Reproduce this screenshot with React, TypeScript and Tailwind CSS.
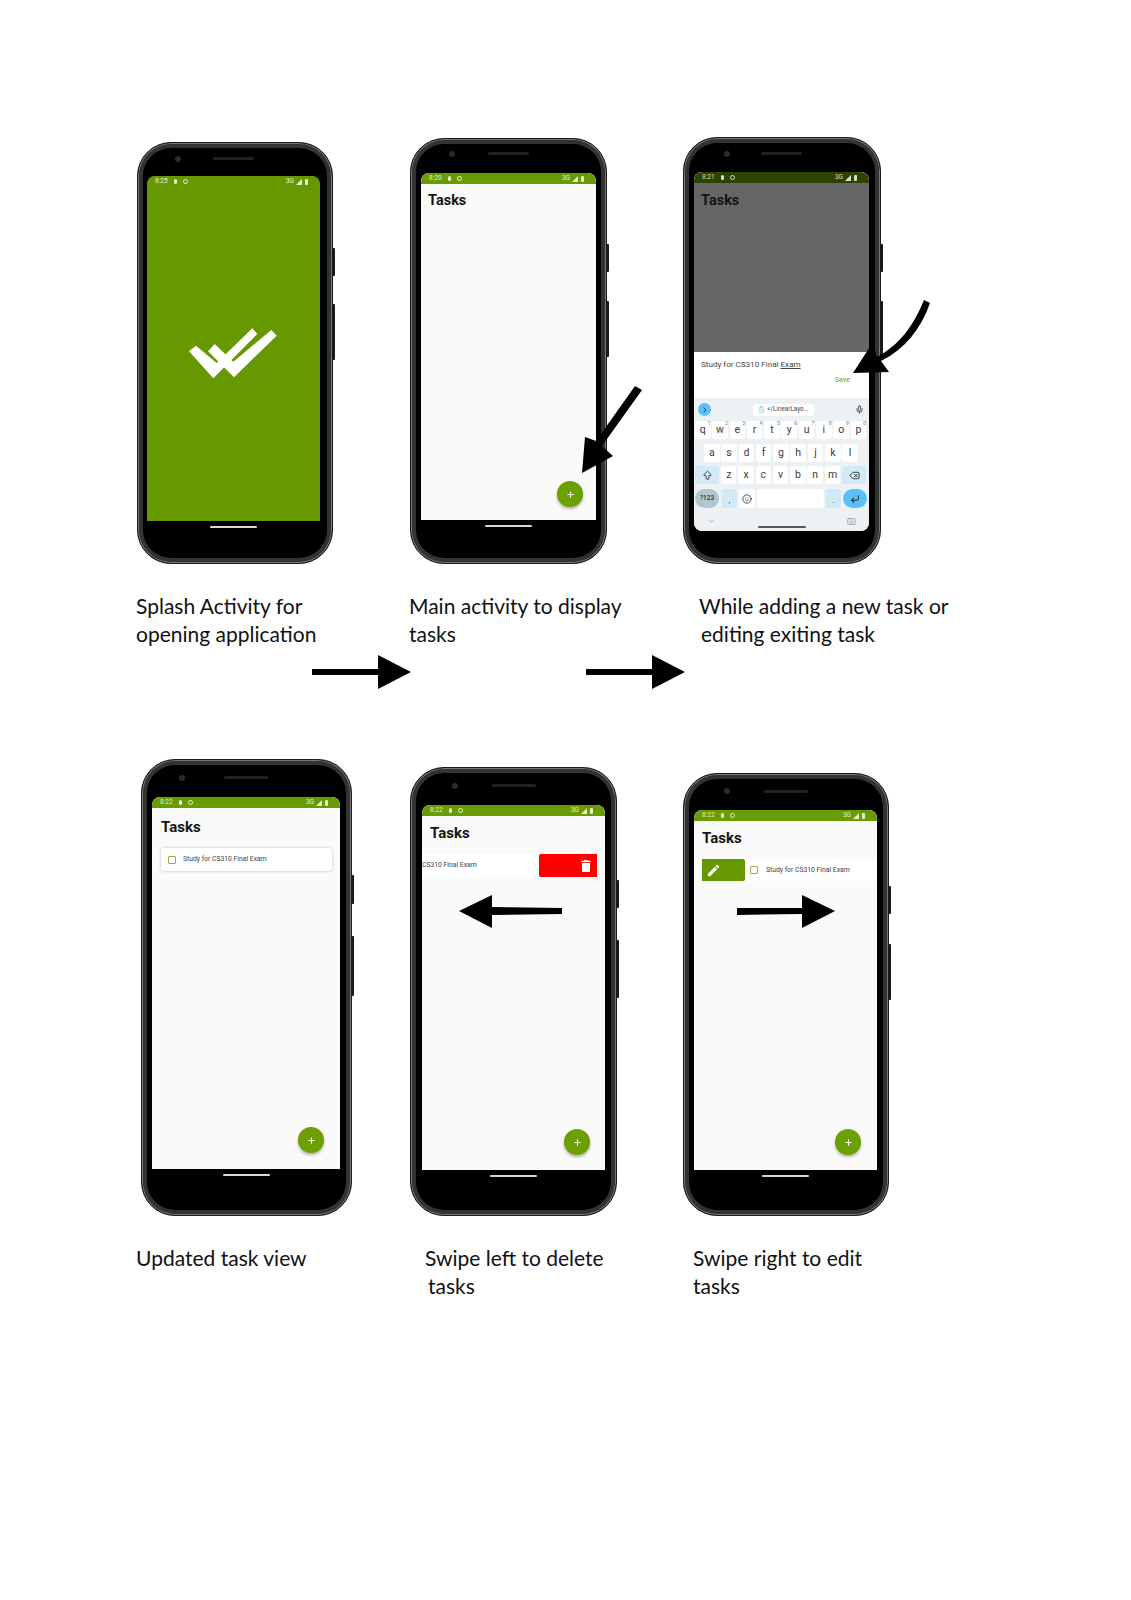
import type { ReactNode } from "react";
import {
  ArrowBigUp,
  ChevronDown,
  ChevronRight,
  ClipboardList,
  CornerDownLeft,
  Delete,
  Keyboard,
  Mic,
  Plus,
  Smile,
} from "lucide-react";

const TrashIcon = () => (
  <svg viewBox="0 0 24 24" className="w-[16px] h-[16px]" fill="#ffffff">
    <path d="M6 19c0 1.1.9 2 2 2h8c1.1 0 2-.9 2-2V7H6v12zM19 4h-3.5l-1-1h-5l-1 1H5v2h14V4z" />
  </svg>
);

const PencilIcon = () => (
  <svg viewBox="0 0 24 24" className="w-[15px] h-[15px]" fill="#ffffff">
    <path d="M3 17.25V21h3.75L17.81 9.94l-3.75-3.75L3 17.25zM20.71 7.04c.39-.39.39-1.02 0-1.41l-2.34-2.34c-.39-.39-1.02-.39-1.41 0l-1.83 1.83 3.75 3.75 1.83-1.83z" />
  </svg>
);

type StatusProps = { time: string; bar?: string; tone?: string };

const StatusBar = ({ time, bar = "bg-[#699c00]", tone = "text-[#e6efcf]" }: StatusProps) => (
  <div className={`h-[11px] shrink-0 rounded-t-[8px] flex items-center justify-between pl-[8px] pr-[12px] text-[6.5px] ${bar} ${tone}`}>
    <div className="flex items-center gap-[6px]">
      <span>{time}</span>
      <span className="w-[3px] h-[5px] rounded-full bg-current" />
      <span className="w-[5px] h-[5px] rounded-full border border-current" />
    </div>
    <div className="flex items-center gap-[2px]">
      <span>3G</span>
      <svg viewBox="0 0 6 6" className="w-[6px] h-[6px]" fill="currentColor">
        <polygon points="6,0 6,6 0,6" />
      </svg>
      <span className="w-[3px] h-[6px] ml-[1px] rounded-[1px] bg-current" />
    </div>
  </div>
);

const Title = ({ className }: { className: string }) => (
  <h1 className={`leading-[19px] font-bold text-[#141414] ${className}`}>Tasks</h1>
);

const Fab = ({ className }: { className: string }) => (
  <div className={`absolute w-[26px] h-[26px] rounded-full bg-[#6ca000] shadow-[0_2px_3px_rgba(0,0,0,0.3)] flex items-center justify-center ${className}`}>
    <Plus className="w-[9px] h-[9px] text-white" strokeWidth={3} />
  </div>
);

const Checkbox = () => <span className="w-[8px] h-[8px] shrink-0 border-[1.5px] border-[#8fb24e] rounded-[1px]" />;

const TaskText = ({ children }: { children: ReactNode }) => (
  <span className="text-[6.8px] text-[#444444] whitespace-nowrap">{children}</span>
);

type PhoneProps = {
  size: string;
  inset: string;
  topBezel: string;
  bottomBezel?: string;
  camera: string;
  buttons: string[];
  speaker?: string;
  screen: string;
  homeBar?: boolean;
  children: ReactNode;
};

const Phone = ({ size, inset, topBezel, bottomBezel, camera, buttons, speaker = "w-[41px]", screen, homeBar = true, children }: PhoneProps) => (
  <div className={`relative flex flex-col bg-black rounded-[34px] border border-[#1c1c1c] shadow-[inset_0_0_0_1px_#777777,inset_0_0_0_5px_#333333] font-['Roboto',sans-serif] ${size} ${inset}`}>
    <div className={`relative shrink-0 flex items-center justify-center ${topBezel}`}>
      <span className={`absolute w-[6px] h-[6px] rounded-full bg-[#2b2b2b] ${camera}`} />
      <span className={`h-[3px] rounded-full bg-[#222222] ${speaker}`} />
    </div>
    <div className={`relative flex-1 flex flex-col overflow-hidden ${screen}`}>{children}</div>
    {homeBar && (
      <div className={`shrink-0 flex justify-center pt-[5px] ${bottomBezel}`}>
        <span className="w-[47px] h-[2px] rounded-full bg-[#d8d8d8]" />
      </div>
    )}
    {buttons.map((b) => (
      <span key={b} className={`absolute right-[-3px] w-[3px] bg-[#1a1a1a] rounded-r-[1px] ${b}`} />
    ))}
  </div>
);

const Key = ({ label, sup, className = "" }: { label: string; sup?: string; className?: string }) => (
  <div className={`relative w-[15.5px] shrink-0 rounded-[3px] bg-white flex items-center justify-center text-[10.5px] text-[#3c3c3c] ${className}`}>
    {label}
    {sup && <span className="absolute right-[0px] top-[-1px] text-[5px] text-[#777777]">{sup}</span>}
  </div>
);

const KeyboardPanel = () => (
  <div className="flex-1 flex flex-col bg-[#eef1f3] px-[1px] rounded-b-[8px]">
    <div className="relative h-[23px] shrink-0 flex items-center justify-center">
      <span className="absolute left-[3px] w-[13px] h-[13px] rounded-full bg-[#5bc0f7] flex items-center justify-center">
        <ChevronRight className="w-[8px] h-[8px] text-[#23384a]" strokeWidth={3} />
      </span>
      <span className="ml-[4px] h-[12px] w-[61px] rounded-[3px] bg-white flex items-center justify-center gap-[2px] text-[6.3px] text-[#444444] whitespace-nowrap">
        <ClipboardList className="w-[7px] h-[7px] text-[#7fc4ef]" />
        &lt;/LinearLayo...
      </span>
      <Mic className="absolute right-[4px] w-[9px] h-[9px] text-[#444444]" strokeWidth={2.5} />
    </div>
    <div className="flex gap-[1.8px] h-[18px]">
      {"qwertyuiop".split("").map((k, i) => (
        <Key key={k} label={k} sup={String((i + 1) % 10)} />
      ))}
    </div>
    <div className="flex gap-[1.8px] h-[18px] mt-[5px] pl-[9px]">
      {"asdfghjkl".split("").map((k) => (
        <Key key={k} label={k} />
      ))}
    </div>
    <div className="flex gap-[1.8px] h-[18px] mt-[4px]">
      <div className="w-[24px] mr-[0.2px] shrink-0 rounded-[3px] bg-[#d2e9f8] flex items-center justify-center">
        <ArrowBigUp className="w-[11px] h-[11px] text-[#333333]" strokeWidth={2} />
      </div>
      {"zxcvbnm".split("").map((k) => (
        <Key key={k} label={k} />
      ))}
      <div className="w-[24px] shrink-0 rounded-[3px] bg-[#d2e9f8] flex items-center justify-center">
        <Delete className="w-[11px] h-[11px] text-[#333333]" />
      </div>
    </div>
    <div className="flex h-[19px] mt-[5px]">
      <div className="w-[24px] shrink-0 rounded-full bg-[#b2c6d0] flex items-center justify-center text-[6.5px] font-medium text-[#333333]">?123</div>
      <div className="w-[15px] ml-[3px] shrink-0 rounded-[3px] bg-[#d2e9f8] flex items-end justify-center text-[8px] leading-[14px] text-[#333333]">,</div>
      <div className="w-[16px] ml-[2px] shrink-0 rounded-[3px] bg-white flex items-center justify-center">
        <Smile className="w-[10px] h-[10px] text-[#333333]" />
      </div>
      <div className="w-[67px] ml-[2px] shrink-0 rounded-[3px] bg-white" />
      <div className="w-[15px] ml-[2px] shrink-0 rounded-[3px] bg-[#d2e9f8] flex items-end justify-center text-[8px] leading-[14px] text-[#333333]">.</div>
      <div className="w-[24px] ml-[2px] shrink-0 rounded-full bg-[#5bc0f7] flex items-center justify-center">
        <CornerDownLeft className="w-[10px] h-[10px] text-[#1f2f3a]" strokeWidth={2.5} />
      </div>
    </div>
    <div className="relative flex-1 flex justify-center">
      <ChevronDown className="absolute left-[13px] top-[10px] w-[7px] h-[7px] text-[#777777]" />
      <span className="mt-[18px] w-[48px] h-[2px] rounded-full bg-[#555555]" />
      <Keyboard className="absolute right-[12px] top-[9px] w-[9px] h-[9px] text-[#999999]" />
    </div>
  </div>
);

const Caption = ({ first, second, indent = "", secondIndent = "" }: { first: string; second?: string; indent?: string; secondIndent?: string }) => (
  <p className={`text-[21px] leading-[27.5px] text-[#111111] [font-family:Lato,sans-serif] whitespace-nowrap ${indent}`}>
    {first}
    {second && <span className={`block ${secondIndent}`}>{second}</span>}
  </p>
);

const Logo = () => (
  <svg viewBox="0 0 300 210" className="w-[100px] h-[70px] ml-[1px]" fill="#ffffff">
    <polygon points="15,97 36,80 98,132 205,28 220,45 88,178" />
    <polygon points="72,97 92,75 148,128 262,33 278,50 150,175" />
  </svg>
);

export default function App() {
  return (
    <main className="relative w-[1131px] h-[1600px] overflow-hidden bg-white pt-[137px] pl-[136px]">
      {/* top row */}
      <div className="grid grid-cols-[273px_273px_273px] items-end">
        <Phone
          size="w-[196px] h-[422px] ml-[1px]"
          inset="pl-[9px] pr-[12px]"
          topBezel="h-[33px] pb-[2px]"
          bottomBezel="h-[42px]"
          camera="left-[28px]"
          buttons={["top-[105px] h-[28px]", "top-[161px] h-[56px]"]}
          screen="rounded-t-[8px] bg-[#669900]"
        >
          <StatusBar time="8:25" bar="bg-[#669900]" />
          <div className="flex-1 flex items-center justify-center">
            <Logo />
          </div>
        </Phone>
        <Phone
          size="w-[197px] h-[426px] ml-[1px]"
          inset="pl-[10px] pr-[10px]"
          topBezel="h-[34px] pb-[5px]"
          bottomBezel="h-[43px]"
          camera="left-[28px]"
          buttons={["top-[105px] h-[28px]", "top-[162px] h-[56px]"]}
          screen="rounded-t-[8px] bg-[#fafafa]"
        >
          <StatusBar time="8:20" />
          <Title className="pl-[7px] pt-[7px] text-[14.5px]" />
          <Fab className="bottom-[13px] right-[13px]" />
        </Phone>
        <Phone
          size="w-[198px] h-[427px] ml-[1px]"
          inset="pl-[10px] pr-[11px] pb-[32px]"
          topBezel="h-[34px] pb-[3px]"
          camera="left-[30px]"
          homeBar={false}
          buttons={["top-[106px] h-[28px]", "top-[163px] h-[56px]"]}
          screen="rounded-[8px] bg-white"
        >
          <StatusBar time="8:21" bar="bg-[#2f4300]" tone="text-[#d8dfc8]" />
          <div className="h-[169px] shrink-0 bg-[#666666]">
            <Title className="pl-[7px] pt-[8px] text-[14.5px]" />
          </div>
          <div className="h-[46px] shrink-0 bg-white pl-[7px] pt-[7px] text-[8.1px] leading-[11px] text-[#444444]">
            Study for CS310 Final <span className="underline">Exam</span>
            <div className="mt-[5px] pr-[19px] text-right text-[7px] font-medium text-[#8ab82e]">Save</div>
          </div>
          <KeyboardPanel />
        </Phone>
      </div>
      <div className="grid grid-cols-[273px_273px_273px] mt-[28px]">
        <Caption first="Splash Activity for" second="opening application" />
        <Caption first="Main activity to display" second="tasks" />
        <Caption first="While adding a new task or" second="editing exiting task" indent="pl-[17px]" secondIndent="pl-[2px]" />
      </div>

      {/* bottom row */}
      <div className="grid grid-cols-[273px_273px_273px] items-end mt-[112px]">
        <Phone
          size="w-[211px] h-[457px] ml-[5px]"
          inset="pl-[10px] pr-[11px]"
          topBezel="h-[37px] pb-[2px]"
          bottomBezel="h-[46px]"
          camera="left-[27px]"
          speaker="w-[44px]"
          buttons={["top-[115px] h-[29px]", "top-[176px] h-[60px]"]}
          screen="rounded-t-[8px] bg-[#fafafa]"
        >
          <StatusBar time="8:22" />
          <Title className="pl-[9px] pt-[10px] text-[15px]" />
          <div className="mt-[11px] ml-[9px] mr-[8px] h-[23px] rounded-[3px] bg-white shadow-[0_0_3px_rgba(0,0,0,0.25)] flex items-center gap-[7px] pl-[7px]">
            <Checkbox />
            <TaskText>Study for CS310 Final Exam</TaskText>
          </div>
          <Fab className="bottom-[16px] right-[16px]" />
        </Phone>
        <Phone
          size="w-[207px] h-[449px] ml-[1px]"
          inset="pl-[11px] pr-[11px]"
          topBezel="h-[37px] pb-[2px]"
          bottomBezel="h-[45px]"
          camera="left-[30px]"
          speaker="w-[44px]"
          buttons={["top-[112px] h-[28px]", "top-[172px] h-[58px]"]}
          screen="rounded-t-[8px] bg-[#fafafa]"
        >
          <StatusBar time="8:22" />
          <Title className="pl-[8px] pt-[8px] text-[15px]" />
          <div className="mt-[11px] mr-[8px] h-[23px] flex">
            <div className="flex-1 bg-white flex items-center">
              <TaskText>CS310 Final Exam</TaskText>
            </div>
            <div className="w-[58px] bg-[#ff0000] rounded-l-[2px] flex items-center justify-end pr-[3px]">
              <TrashIcon />
            </div>
          </div>
          <Fab className="bottom-[15px] right-[15px]" />
        </Phone>
        <Phone
          size="w-[206px] h-[443px] ml-[1px]"
          inset="pl-[10px] pr-[11px]"
          topBezel="h-[36px] pb-[2px]"
          bottomBezel="h-[45px]"
          camera="left-[30px]"
          speaker="w-[44px]"
          buttons={["top-[112px] h-[28px]", "top-[170px] h-[56px]"]}
          screen="rounded-t-[8px] bg-[#fafafa]"
        >
          <StatusBar time="8:22" />
          <Title className="pl-[8px] pt-[8px] text-[15px]" />
          <div className="mt-[11px] ml-[8px] h-[22px] flex bg-white">
            <div className="w-[43px] bg-[#669900] rounded-r-[2px] flex items-center pl-[4px]">
              <PencilIcon />
            </div>
            <div className="flex-1 flex items-center gap-[8px] pl-[5px]">
              <Checkbox />
              <TaskText>Study for CS310 Final Exam</TaskText>
            </div>
          </div>
          <Fab className="bottom-[15px] right-[16px]" />
        </Phone>
      </div>
      <div className="grid grid-cols-[273px_273px_273px] mt-[28px]">
        <Caption first="Updated task view" />
        <Caption first="Swipe left to delete" second="tasks" indent="pl-[16px]" secondIndent="pl-[3px]" />
        <Caption first="Swipe right to edit" second="tasks" indent="pl-[11px]" />
      </div>

      {/* arrows drawn over the page */}
      <svg viewBox="0 0 100 36" className="absolute left-[312px] top-[654px] w-[100px] h-[36px]">
        <polygon points="0,15 66,15 66,1 99,18 66,35 66,21 0,21" />
      </svg>
      <svg viewBox="0 0 100 36" className="absolute left-[586px] top-[654px] w-[100px] h-[36px]">
        <polygon points="0,15 66,15 66,1 99,18 66,35 66,21 0,21" />
      </svg>
      <svg viewBox="0 0 70 100" className="absolute left-[575px] top-[380px] w-[70px] h-[100px]">
        <polygon points="60,6 67,10 27,66 38,76 7,93 10,57 21,61" />
      </svg>
      <svg viewBox="0 0 90 90" className="absolute left-[845px] top-[295px] w-[90px] h-[90px]">
        <path d="M79 5 C 68 32 54 50 32 62 L 28 47 L 8 78 L 44 77 L 36 66 C 60 54 76 34 85 8 Z" />
      </svg>
      <svg viewBox="0 0 105 36" className="absolute left-[458px] top-[894px] w-[105px] h-[36px]">
        <polygon points="1,17 34,1 34,13 104,14 104,20 34,21 34,34" />
      </svg>
      <svg viewBox="0 0 100 36" className="absolute left-[736px] top-[894px] w-[100px] h-[36px]">
        <polygon points="1,14 66,14 66,1 99,17 66,34 66,20 1,21" />
      </svg>
    </main>
  );
}
